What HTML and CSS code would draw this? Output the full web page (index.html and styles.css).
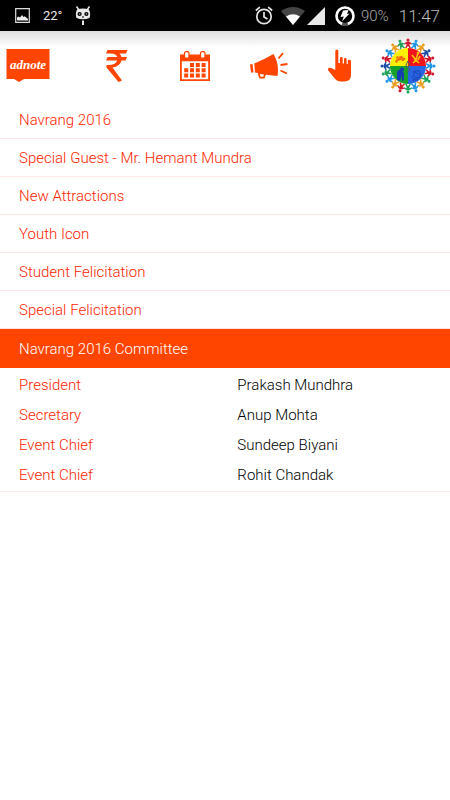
FILE: index.html
```html
<!DOCTYPE html>
<html lang="en">
<head>
<meta charset="utf-8">
<meta name="viewport" content="width=device-width, initial-scale=1">
<title>Navrang 2016</title>
<link rel="stylesheet" href="styles.css">
</head>
<body>
<div class="status">
  <div class="status-left">
    <svg width="15" height="15" viewBox="0 0 15 15"><path d="M.7.7h13.6v13.6H.7z" fill="none" stroke="#ddd" stroke-width="1.200"/><path d="M2 12.500V9.500l1.500-1 1.500 1L7 7l1.500 2 1.200-.7 3.300 2.700v1.500z" fill="#eee"/></svg>
    <span class="temp">22°</span>
    <svg width="16" height="20" viewBox="0 0 16 20"><path d="M1.500.5 4 4M14.500.5 12 4" stroke="#e8e8e8" stroke-width="1.500"/><path d="M2 3.500Q8 1.500 14 3.500 16 8 14.500 12 8 14.500 1.500 12 0 8 2 3.500z" fill="#e8e8e8"/><circle cx="4.600" cy="8" r="2.100"/><circle cx="11.400" cy="8" r="2.100"/><path d="M4 8h1.300M10.800 8h1.300" stroke="#eee"/><path d="M7 11h2" stroke="#000"/><path d="M8 14.500V19" stroke="#e8e8e8" stroke-width="2"/></svg>
  </div>
  <div class="status-right">
    <svg class="alarm" width="18" height="19" viewBox="0 0 18 19"><g fill="none" stroke="#e6e6e6" stroke-width="1.700"><circle cx="9" cy="10.500" r="7.200"/><path d="M.8 4.500 4.800 1.200M17.200 4.500l-4-3.300M9 6v5l3.500 2"/></g></svg>
    <svg class="wifi" width="24" height="18" viewBox="0 0 24 18"><path d="M0 4Q12-4 24 4L12 18z" fill="#444"/><path d="M5 9.500Q12 5 19 9.500L12 18z" fill="#fff"/></svg>
    <svg class="signal" width="18" height="18" viewBox="0 0 18 18"><path d="M18 0v18H0z" fill="#e8e8e8"/></svg>
    <svg class="battery" width="20" height="20" viewBox="0 0 20 20"><circle cx="10" cy="10" r="8.500" fill="none" stroke="#fff" stroke-width="2.600"/><path d="M7 18q3 1.200 6 0" fill="none" stroke="#555" stroke-width="3"/><path d="m8 4.500 5.500-.5-1.500 4 2.500-.5-7.500 8 1.800-5-3.300.5z" fill="#fff"/></svg>
    <span class="percent">90%</span>
    <time class="clock">11:47</time>
  </div>
</div>

<nav class="toolbar" aria-label="Main">
  <a href="#" aria-label="Adnote home"><svg width="44" height="33" viewBox="0 0 44 33"><path d="M.5 0H43.500V30H18l-5 3-5-3H.5z" fill="#ff4500"/><text class="brand" x="22" y="20" text-anchor="middle">adnote</text></svg></a>
  <a href="#" aria-label="Payments"><svg width="23" height="32" viewBox="0 0 23 32"><path d="M2.500 0H22.500L21 3.500H14.500Q16.200 5 16.500 7H22L20.500 10.500H16.500Q15 16.500 7.500 17.500L17 30.500 13.500 32 1.500 17.500V15Q10.500 15.500 12.200 10.500H1L2.500 7H12.300Q11 3.500 6 3.500H1z" fill="#ff4500"/></svg></a>
  <a href="#" aria-label="Calendar"><svg width="30" height="30" viewBox="0 0 30 30"><path d="M0 3.500H30V30H0zM1.800 10.200V28.200H28.200V10.200z" fill="#ff4500" fill-rule="evenodd"/><rect x="4.500" y=".7" width="4.500" height="6.500" rx="1.500" fill="#fff" stroke="#ff4500" stroke-width="1.300"/><rect x="20.500" y=".7" width="4.500" height="6.500" rx="1.500" fill="#fff" stroke="#ff4500" stroke-width="1.300"/><path d="M10 12h4v4h-4zM15.800 12h4v4h-4zM21.600 12h4v4h-4zM4.200 17.200h4v4h-4zM10 17.200h4v4h-4zM15.800 17.200h4v4h-4zM21.600 17.200h4v4h-4zM4.200 22.400h4v4h-4zM10 22.400h4v4h-4zM15.800 22.400h4v4h-4zM21.600 22.400h4v4h-4z" fill="#ff4500"/></svg></a>
  <a href="#" aria-label="Announcements"><svg width="38" height="28" viewBox="0 0 38 28"><path d="M0 12.500 2.500 12 3.500 20.500H1zM4.300 11.500Q14 7.500 23.500 2 29.500 12 27.500 24L15.800 22.700 14.500 26.500H9.500L8 22.500 8 21 5 20.500zM9.800 22l.8 2.700h2.700l.8-2.200z" fill="#ff4500" fill-rule="evenodd"/><path d="m28.500 6.500 4.500-5.500M30.500 13l7-1M30.500 18.500l6.500 3" stroke="#ff4500" stroke-width="1.900"/></svg></a>
  <a href="#" aria-label="Touch"><svg width="26" height="34" viewBox="0 0 26 34"><path d="M8.300 2Q8.300.5 9.800.5T11.300 2V14H13V9Q13 8 14.500 8T15.700 9V14.500H17V10Q17 9 18.300 9T19.600 10V15H20.800V11.500Q21 10.500 22.500 10.800T24 12.500V26Q24 32.500 17 32.500H14Q9.500 32.500 7 28.500L1.200 21.500Q.2 19.700 2 18.800 3.500 18 8.300 21z" fill="#ff4500"/></svg></a>
  <a href="#" aria-label="Navrang"><svg width="56" height="56" viewBox="-28 -28 56 56">
    <defs><g id="man"><circle cy="-26" r="1.500"/><path d="M-3.900-22.500-1-24.500H1L3.900-22.500 3.400-21.400 1.500-22.200 1.500-21 2.900-18.300 1.500-17.800 0-20.200-1.500-17.800-2.900-18.300-1.500-21-1.500-22.200-3.400-21.400z"/></g></defs>
    <g fill="#d0182b"><use href="#man"/><use href="#man" transform="rotate(72)"/><use href="#man" transform="rotate(108)"/><use href="#man" transform="rotate(198)"/><use href="#man" transform="rotate(288)"/></g>
    <g fill="#2196e8"><use href="#man" transform="rotate(18)"/><use href="#man" transform="rotate(90)"/><use href="#man" transform="rotate(162)"/><use href="#man" transform="rotate(234)"/><use href="#man" transform="rotate(306)"/></g>
    <g fill="#e9a021"><use href="#man" transform="rotate(36)"/><use href="#man" transform="rotate(144)"/><use href="#man" transform="rotate(216)"/><use href="#man" transform="rotate(324)"/></g>
    <g fill="#1fa35b"><use href="#man" transform="rotate(126)"/><use href="#man" transform="rotate(180)"/><use href="#man" transform="rotate(252)"/><use href="#man" transform="rotate(342)"/></g>
    <g fill="#1d4fa5"><use href="#man" transform="rotate(54)"/><use href="#man" transform="rotate(270)"/></g>
    <path d="M0 0V-18A18 18 0 0 0-18 0z" fill="#ffef00"/><path d="M0 0V-18A18 18 0 0 1 18 0z" fill="#f2141b"/><path d="M0 0V18A18 18 0 0 1-18 0z" fill="#17a02b"/><path d="M0 0V18A18 18 0 0 0 18 0z" fill="#2864e6"/>
    <path d="M-13-4q2-7 7-6l4 3-3 2-2-1-3 1-1 2z" fill="#f47a10"/><path d="m-12-8 2-2m1 4 3-4m0 5 3-3" stroke="#f05a10"/>
    <path d="m4-11 4 5-3 3m3-3 3 3m-3-3 2-7m-2 7-2-1m6-3-2 4" fill="none" stroke="#ffc400" stroke-width="1.600"/><circle cx="10" cy="-13" r="1.300" fill="#ffc400"/>
    <path d="M-11 14V6q1-3 4-2l3 3v7l-2 1V9l-2 6z" fill="#173bb5"/><circle cx="-6" cy="3.500" r="2" fill="#173bb5"/>
    <g fill="none" stroke="#1a45b0"><circle cx="9" cy="8" r="3.500"/><path d="M3 10q5 6 10 1M5 5l7 4M4 14h6"/></g>
    <path d="M-1-5 2-2 0 1l2 3-3 2M0-5l-2 4 1 3" fill="none" stroke="#51605a"/>
  </svg></a>
</nav>

<main>
  <ul class="topics">
    <li><a href="#">Navrang 2016</a></li>
    <li><a href="#">Special Guest - Mr. Hemant Mundra</a></li>
    <li><a href="#">New Attractions</a></li>
    <li><a href="#">Youth Icon</a></li>
    <li><a href="#">Student Felicitation</a></li>
    <li><a href="#">Special Felicitation</a></li>
    <li><a class="active" href="#committee">Navrang 2016 Committee</a></li>
  </ul>
  <div class="committee" id="committee">
    <table>
      <tr><th scope="row">President</th><td>Prakash Mundhra</td></tr>
      <tr><th scope="row">Secretary</th><td>Anup Mohta</td></tr>
      <tr><th scope="row">Event Chief</th><td>Sundeep Biyani</td></tr>
      <tr><th scope="row">Event Chief</th><td>Rohit Chandak</td></tr>
    </table>
  </div>
</main>
</body>
</html>
```
FILE: styles.css
```css
* {
  box-sizing: border-box;
}

body {
  margin: 0;
  background: #fff;
  color: #000;
  font: 300 15px/20px Roboto, sans-serif;
}

a {
  color: inherit;
  text-decoration: none;
}

svg {
  display: block;
  flex: none;
}

.status {
  display: flex;
  justify-content: space-between;
  height: 31px;
  padding: 0 10px 0 15px;
  background: #000;
}

.status-left,
.status-right {
  display: flex;
  align-items: center;
}

.status-left {
  gap: 13px;
}

.temp {
  color: #e8e8e8;
  font: 400 13px/20px Roboto, sans-serif;
}

.wifi {
  margin-left: 8px;
}

.signal {
  margin-left: 2px;
}

.battery {
  margin-left: 10px;
}

.percent {
  margin-left: 6px;
  color: #aaa;
}

.clock {
  margin-left: 10px;
  color: #bbb;
  font-size: 17px;
}

.toolbar {
  display: grid;
  grid-template-columns: 99fr 75fr 70fr 77fr 53fr 70fr;
  align-items: center;
  height: 70px;
  padding: 0 0 1px 6px;
  background: linear-gradient(#ddd, #fff 16px);
}

.toolbar a {
  justify-self: start;
}

.brand {
  fill: #fff;
  font: italic 700 13px "Liberation Serif", serif;
}

.topics {
  margin: 0;
  padding: 0;
  list-style: none;
}

.topics a {
  display: block;
  padding: 9px 19px 8px;
  border-bottom: 1px solid #ffe6e6;
  color: #ff2400;
}

.topics .active {
  padding-top: 10px;
  border-color: #ff4500;
  background: #ff4500;
  color: #fff;
}

.committee {
  padding: 2px 19px 1px;
  border-bottom: 1px solid #f8eeea;
}

table {
  width: 100%;
  border-collapse: collapse;
  table-layout: fixed;
}

th,
td {
  padding: 5px 0;
  font-weight: 300;
  text-align: left;
}

th {
  width: 53%;
  color: #ff2400;
}
```
